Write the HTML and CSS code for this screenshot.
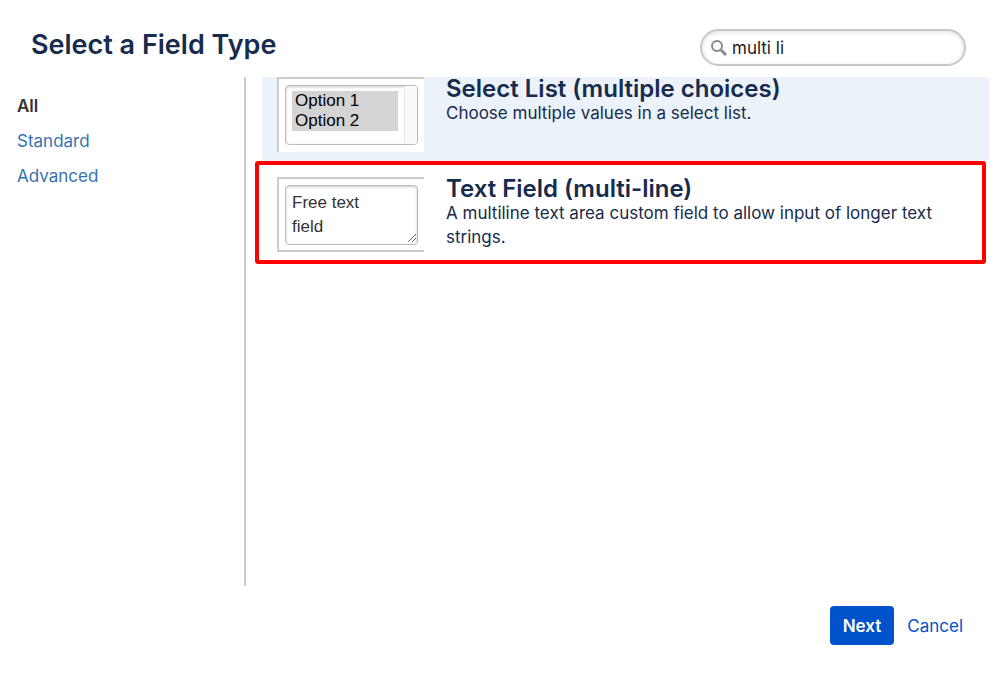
FILE: index.html
```html
<!DOCTYPE html>
<html lang="en">
<head>
    <meta charset="UTF-8">
    <meta name="viewport" content="width=device-width, initial-scale=1.0">
    <title>Select a Field Type</title>
    <link rel="stylesheet" href="styles.css">
</head>
<body>
    <header class="header">
        <h1 class="title">Select a Field Type</h1>
        <label class="search">
            <svg class="search-icon" width="18" height="18" viewBox="0 0 18 18" fill="none" stroke="#8a8a8a" aria-hidden="true">
                <circle cx="7" cy="7" r="5" stroke-width="2"/>
                <path d="M11 11l5 5" stroke-width="3"/>
            </svg>
            <input type="text" class="search-input" aria-label="Search" value="multi li">
        </label>
    </header>

    <main class="content">
        <nav class="sidebar">
            <a href="#" class="category active">All</a>
            <a href="#" class="category">Standard</a>
            <a href="#" class="category">Advanced</a>
        </nav>

        <ul class="field-list">
            <li class="field selected">
                <div class="preview">
                    <div class="select-box">
                        <select class="preview-select" multiple size="2" aria-label="Select list preview">
                            <option class="option">Option 1</option>
                            <option class="option">Option 2</option>
                        </select>
                        <span class="scroll-track"></span>
                    </div>
                </div>
                <div class="field-text">
                    <h2 class="field-name">Select List (multiple choices)</h2>
                    <p class="description">Choose multiple values in a select list.</p>
                </div>
            </li>
            <li class="field highlighted">
                <div class="preview closed">
                    <textarea class="preview-textarea" aria-label="Text field preview">Free text
field</textarea>
                    <svg class="grip" width="10" height="10" viewBox="0 0 10 10" stroke="#666" aria-hidden="true">
                        <path d="M1 9L9 1M5 9L9 5"/>
                    </svg>
                </div>
                <div class="field-text">
                    <h2 class="field-name">Text Field (multi-line)</h2>
                    <p class="description">A multiline text area custom field to allow input of longer text strings.</p>
                </div>
            </li>
        </ul>
    </main>

    <footer class="footer">
        <button type="button" class="next">Next</button>
        <a href="#" class="cancel">Cancel</a>
    </footer>
</body>
</html>
```

FILE: styles.css
```css
* {
    box-sizing: border-box;
}

body {
    margin: 0;
    min-height: 100vh;
    display: flex;
    flex-direction: column;
    background-color: #fff;
    color: #172b4d;
    font-family: Inter, sans-serif;
    font-size: 17px;
    line-height: 24px;
}

a {
    text-decoration: none;
}

.header {
    display: flex;
    justify-content: space-between;
    align-items: flex-start;
    padding: 29px 33px 11px 31px;
}

.title {
    margin: 0;
    font-size: 27px;
    font-weight: 600;
    line-height: 32px;
}

.search {
    display: flex;
    align-items: center;
    gap: 4px;
    width: 266px;
    height: 37px;
    padding: 0 8px;
    border: 2px solid #c8c8c8;
    border-radius: 20px;
    box-shadow: inset 0 1px 4px rgba(0, 0, 0, 0.15);
}

.search-input {
    flex: 1;
    min-width: 0;
    padding: 0;
    border: none;
    outline: none;
    background: transparent;
    color: #222;
    font-family: inherit;
    font-size: 17px;
}

.content {
    flex: 1;
    display: flex;
}

.sidebar {
    display: flex;
    flex-direction: column;
    gap: 11px;
    width: 246px;
    padding: 17px;
    border-right: 2px solid #ccc;
}

.category {
    color: #3572b0;
}

.category.active {
    color: #333;
    font-weight: 600;
}

.field-list {
    flex: 1;
    margin: 0;
    padding: 0 10px 0 16px;
    list-style: none;
}

.field {
    display: flex;
    align-items: flex-start;
    gap: 22px;
    padding: 15px 15px 10px;
}

.field.selected {
    padding-top: 0;
    background-color: #ebf2f9;
}

/* red frame around the chosen field type */
.highlighted {
    position: relative;
}

.highlighted::after {
    content: "";
    position: absolute;
    top: -1px;
    right: 3px;
    bottom: -2px;
    left: -7px;
    border: 4px solid #f00;
    border-radius: 3px;
    pointer-events: none;
}

.preview {
    position: relative;
    flex: none;
    width: 147px;
    height: 75px;
    padding: 6px;
    border-top: 2px solid #ccc;
    border-left: 2px solid #ccc;
    background-color: #fff;
}

.preview.closed {
    border-bottom: 2px solid #ccc;
}

.select-box,
.preview-textarea {
    display: flex;
    width: 133px;
    height: 60px;
    border: 1px solid #bbb;
    border-radius: 4px;
    background-color: #fff;
    box-shadow: inset 0 1px 3px rgba(0, 0, 0, 0.2);
    font-family: "Liberation Sans", Arial, sans-serif;
    font-size: 17px;
}

.preview-select {
    flex: 1;
    margin: 5px 6px 5px 6px;
    padding: 0;
    border: none;
    border-radius: 0;
    outline: none;
    overflow: hidden;
    background: transparent;
    font: inherit;
}

.option {
    min-height: 0;
    padding: 0 3px;
    background-color: #d4d4d4;
    color: #000;
    line-height: 21px;
}

.scroll-track {
    width: 13px;
    border-left: 1px solid #e8e8e8;
    border-radius: 0 3px 3px 0;
    background-color: #fafafa;
}

.preview-textarea {
    padding: 5px 6px;
    resize: none;
    outline: none;
    overflow: hidden;
    color: #333;
    line-height: 24px;
}

.grip {
    position: absolute;
    right: 7px;
    bottom: 7px;
}

.field-name {
    margin: 0;
    font-size: 24px;
    font-weight: 600;
    line-height: 24px;
}

.description {
    margin: 0;
}

.footer {
    display: flex;
    justify-content: flex-end;
    align-items: center;
    gap: 13px;
    padding: 20px 36px 44px;
}

.next {
    height: 39px;
    padding: 0 13px;
    border: none;
    border-radius: 4px;
    background-color: #0052cc;
    color: #fff;
    font-family: inherit;
    font-size: 17px;
    font-weight: 600;
    cursor: pointer;
}

.cancel {
    color: #0052cc;
}
```
